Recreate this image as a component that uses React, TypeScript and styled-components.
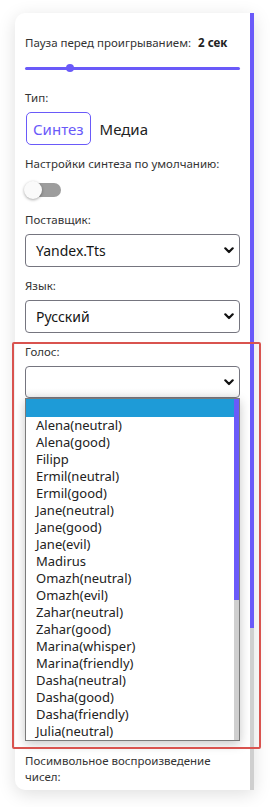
import styled, { createGlobalStyle } from "styled-components";

const purple = "#6a5af9";

const GlobalStyle = createGlobalStyle`
  html, body {
    margin: 0;
    padding: 0;
    background: #fff;
  }
  body {
    font-family: "Noto Sans", "Liberation Sans", sans-serif;
    color: #2d2d2d;
  }
  * {
    box-sizing: border-box;
  }
`;

const Page = styled.div`
  position: relative;
  width: 273px;
  height: 807px;
  padding: 13px 0 0 15px;
  overflow: hidden;
`;

const Card = styled.div`
  width: 239px;
  height: 777px;
  display: flex;
  background: #fff;
  border-radius: 10px 0 0 10px;
  box-shadow: 0 4px 18px rgba(0, 0, 0, 0.13);
`;

const Viewport = styled.div`
  flex: 1;
  overflow: hidden;
`;

// hand drawn scrollbar, headless chrome hides the native one
const Rail = styled.div<{ $w: number }>`
  flex: none;
  width: ${(p) => p.$w}px;
  display: flex;
  flex-direction: column;
  background: #cfcfcf;
`;

const Thumb = styled.div<{ $h: number }>`
  height: ${(p) => p.$h}px;
  background: ${purple};
`;

const Content = styled.div`
  padding: 23px 10px 20px;
  display: flex;
  flex-direction: column;
  gap: 12px;
`;

const Field = styled.div`
  display: flex;
  flex-direction: column;
  gap: 7px;
`;

const Label = styled.div`
  font-size: 11.5px;
  line-height: 14px;
  color: #333;
`;

const WrapLabel = styled(Label)`
  line-height: 16px;
`;

const Value = styled.b`
  margin-left: 7px;
  font-weight: 700;
  color: #222;
`;

const Range = styled.input`
  -webkit-appearance: none;
  appearance: none;
  width: 100%;
  height: 22px;
  margin: 0;
  background: transparent;

  &::-webkit-slider-runnable-track {
    height: 3px;
    border-radius: 2px;
    background: ${purple};
  }
  &::-webkit-slider-thumb {
    -webkit-appearance: none;
    width: 8px;
    height: 8px;
    margin-top: -2.5px;
    border: none;
    border-radius: 50%;
    background: ${purple};
  }
`;

const Segmented = styled.div`
  display: flex;
  align-items: center;
  gap: 2px;
  padding-left: 1px;
`;

const TypeButton = styled.div<{ $active?: boolean }>`
  height: 33px;
  padding: 0 6px;
  display: flex;
  align-items: center;
  font-size: 15px;
  border-radius: 5px;
  border: 1px solid ${(p) => (p.$active ? purple : "transparent")};
  color: ${(p) => (p.$active ? purple : "#222")};
`;

const SwitchRow = styled.div`
  height: 23px;
  display: flex;
  align-items: center;
`;

const Switch = styled.div`
  position: relative;
  width: 37px;
  height: 18px;
`;

const SwitchTrack = styled.div`
  margin: 2px 0 0 5px;
  width: 31px;
  height: 14px;
  border-radius: 7px;
  background: #9d9d9d;
`;

const SwitchKnob = styled.div`
  position: absolute;
  left: -1px;
  top: 0;
  width: 18px;
  height: 18px;
  border-radius: 50%;
  background: #fafafa;
  box-shadow: 0 1px 3px rgba(0, 0, 0, 0.35);
`;

const SelectBox = styled.div<{ $open?: boolean }>`
  height: ${(p) => (p.$open ? 32 : 33)}px;
  padding: 0 5px 0 10px;
  display: flex;
  align-items: center;
  justify-content: space-between;
  border: 1px solid #75757f;
  border-radius: 4px;
  font-size: 14px;
  color: #151515;
  background: ${(p) =>
    p.$open ? "linear-gradient(#fff 70%, #f3f3f3)" : "#fff"};
`;

const Chevron = () => (
  <svg width="10" height="7" viewBox="0 0 10 7">
    <path
      d="M1.3 1.3 L5 5 L8.7 1.3"
      fill="none"
      stroke="#111"
      strokeWidth="2.2"
      strokeLinecap="round"
      strokeLinejoin="round"
    />
  </svg>
);

const Dropdown = styled.div`
  display: flex;
  flex-direction: column;
`;

const OptionList = styled.div`
  height: 343px;
  display: flex;
  background: #fff;
  border: 1px solid #7a7a7a;
  box-shadow: 0 3px 10px rgba(0, 0, 0, 0.22);
`;

const Options = styled.div`
  flex: 1;
  overflow: hidden;
`;

const Option = styled.div<{ $selected?: boolean }>`
  height: ${(p) => (p.$selected ? 17.5 : 17)}px;
  line-height: 17px;
  padding: 0 10px;
  font-size: 13px;
  color: #222;
  white-space: nowrap;
  background: ${(p) => (p.$selected ? "#1e9bd7" : "transparent")};
`;

const Highlight = styled.div`
  position: absolute;
  left: 12px;
  top: 342px;
  width: 249px;
  height: 407px;
  border: 2px solid #d9534f;
  border-radius: 2px;
  pointer-events: none;
`;

const voices = [
  "Alena(neutral)",
  "Alena(good)",
  "Filipp",
  "Ermil(neutral)",
  "Ermil(good)",
  "Jane(neutral)",
  "Jane(good)",
  "Jane(evil)",
  "Madirus",
  "Omazh(neutral)",
  "Omazh(evil)",
  "Zahar(neutral)",
  "Zahar(good)",
  "Marina(whisper)",
  "Marina(friendly)",
  "Dasha(neutral)",
  "Dasha(good)",
  "Dasha(friendly)",
  "Julia(neutral)",
  "Julia(strict)",
];

function App() {
  return (
    <>
      <GlobalStyle />
      <Page>
        <Card>
          <Viewport>
            <Content>
              <Field>
                <Label>
                  Пауза перед проигрыванием:<Value>2 сек</Value>
                </Label>
                <Range type="range" min={0} max={10} defaultValue={2} />
              </Field>

              <Field>
                <Label>Тип:</Label>
                <Segmented>
                  <TypeButton $active>Синтез</TypeButton>
                  <TypeButton>Медиа</TypeButton>
                </Segmented>
              </Field>

              <Field>
                <Label>Настройки синтеза по умолчанию:</Label>
                <SwitchRow>
                  <Switch>
                    <SwitchTrack />
                    <SwitchKnob />
                  </Switch>
                </SwitchRow>
              </Field>

              <Field>
                <Label>Поставщик:</Label>
                <SelectBox>
                  Yandex.Tts
                  <Chevron />
                </SelectBox>
              </Field>

              <Field>
                <Label>Язык:</Label>
                <SelectBox>
                  Русский
                  <Chevron />
                </SelectBox>
              </Field>

              <Field>
                <Label>Голос:</Label>
                <Dropdown>
                  <SelectBox $open>
                    <span />
                    <Chevron />
                  </SelectBox>
                  <OptionList>
                    <Options>
                      <Option $selected />
                      {voices.map((v) => (
                        <Option key={v}>{v}</Option>
                      ))}
                    </Options>
                    <Rail $w={5}>
                      <Thumb $h={201} />
                    </Rail>
                  </OptionList>
                </Dropdown>
              </Field>

              <Field>
                <WrapLabel>Посимвольное воспроизведение чисел:</WrapLabel>
              </Field>
            </Content>
          </Viewport>
          <Rail $w={4}>
            <Thumb $h={615} />
          </Rail>
        </Card>
        <Highlight />
      </Page>
    </>
  );
}

export default App;
